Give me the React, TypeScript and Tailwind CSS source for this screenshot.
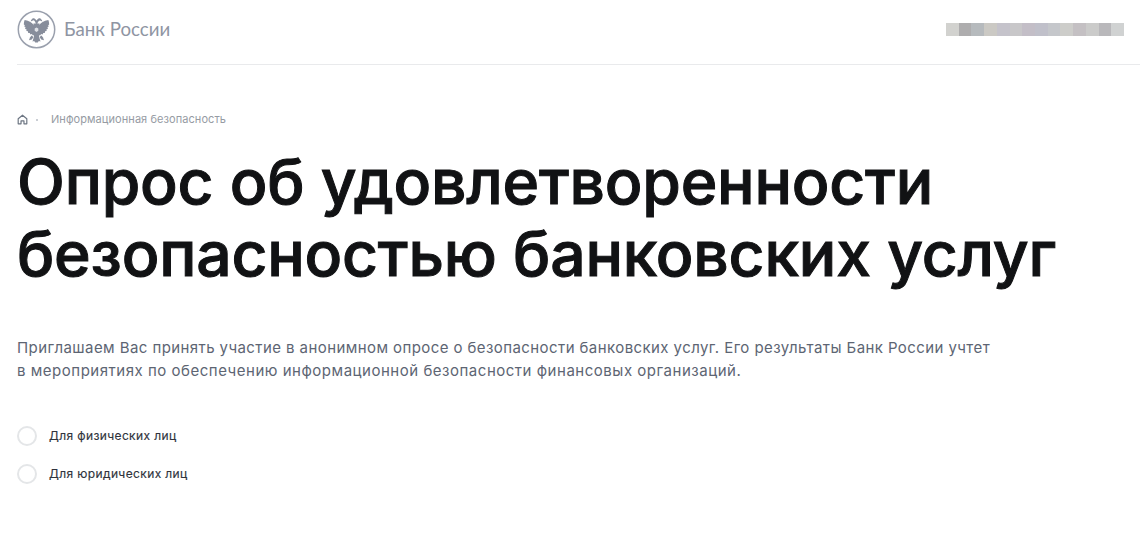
const blurCells = [
  'bg-[#d2d2cf]', 'bg-[#aeadae]', 'bg-[#b6babd]', 'bg-[#cbc9c4]', 'bg-[#c5c3cb]', 'bg-[#c8c7c9]', 'bg-[#c3bec7]',
  'bg-[#c0c0ca]', 'bg-[#c5c7cb]', 'bg-[#cdcdca]', 'bg-[#c4c0c3]', 'bg-[#cbcbca]', 'bg-[#b9b8bb]', 'bg-[#d0d2d2]',
];

const Emblem = () => (
  <svg width="39" height="39" viewBox="0 0 39 39" fill="none">
    <circle cx="19.500" cy="19.500" r="18.200" stroke="#9aa0ad" strokeWidth="1.500" />
    <g fill="#878d9b">
      {/* левое крыло */}
      <path d="M17 15.500c-1.800-2.800-4.800-5.200-9.300-5.600-.6 1.200-.9 3-.8 4.800l1 .2-.7 1.700 1.300.4-.4 1.900 1.400.3-.1 1.900 1.500.1.300 1.900 1.500-.2.700 1.700 1.500-.5.900 1.300 2.100-1.200z" />
      {/* правое крыло */}
      <path d="M22 15.500c1.800-2.800 4.800-5.200 9.300-5.600.6 1.200.9 3 .8 4.800l-1 .2.700 1.700-1.300.4.400 1.900-1.400.3.100 1.900-1.500.1-.3 1.900-1.500-.2-.7 1.700-1.500-.5-.9 1.300-2.100-1.200z" />
      {/* туловище и хвост */}
      <path d="M16.500 13.500h6l.7 8.500-1.200 4.500 1.500 5-1.700-.6-1 1.600h-2.600l-1-1.600-1.700.6 1.500-5-1.200-4.500z" />
      {/* головы */}
      <path d="M18.800 13.800c-.3-1.600-.9-2.800-1.900-3.600l-1 .3-2.200.9.500-1.500 1.300-1.300c1-.8 2.100-.5 2.700.4l1.300 1.500 1.300-1.500c.6-.9 1.700-1.200 2.700-.4l1.300 1.300.5 1.500-2.200-.9-1 .3c-1 .8-1.600 2-1.900 3.600z" />
      {/* лапы */}
      <path d="M14.500 25.500l2 1.500-1.700 2.500-2.800.8 1-2.800z" />
      <path d="M24.500 25.500l-2 1.500 1.700 2.500 2.800.8-1-2.800z" />
    </g>
    <path d="M19.500 17.500l1.800 1v2.200l-1.800 1.300-1.800-1.300v-2.200z" fill="#dfe1e6" />
  </svg>
);

const HomeIcon = () => (
  <svg width="11" height="11" viewBox="0 0 12 12" fill="none" stroke="#6d7683" strokeWidth="1.300" strokeLinejoin="round">
    <path d="M1.300 5.200 6 1.300l4.700 3.900v5.500H7.600V7.600H4.400v3.100H1.300z" />
  </svg>
);

const Option = ({ label }: { label: string }) => (
  <label className="flex items-center gap-3 h-[20px]">
    <span className="w-[20px] h-[20px] rounded-full border-2 border-[#e4e6e8] bg-white shrink-0" />
    <span className="text-[12px] font-normal text-[#2f333c] tracking-[0.38px] [-webkit-text-stroke:0.15px_#2f333c]">{label}</span>
  </label>
);

export default function App() {
  return (
    <div className="w-[1140px] h-[551px] overflow-hidden bg-white pl-[17px] font-['Inter','Noto_Sans',sans-serif]">
      <header className="flex items-center justify-between h-[65px] border-b border-[#e9eaec] pr-[16px]">
        <div className="flex items-center gap-[8px] pb-[5px]">
          <Emblem />
          <span className="font-['Lato','Open_Sans',sans-serif] text-[18.700px] text-[#8f95a3]">Банк России</span>
        </div>
        <div className="flex w-[178px] h-[13px] mb-[6px]">
          {blurCells.map((c, i) => (
            <div key={i} className={`flex-1 ${c}`} />
          ))}
        </div>
      </header>

      <nav className="flex items-center mt-[48px] h-[13px] text-[11px] tracking-[0.07px] text-[#969ba3]">
        <HomeIcon />
        <span className="ml-[8px] mr-[13px] w-[2px] h-[2px] rounded-full bg-[#b9bec6]" />
        <span>Информационная безопасность</span>
      </nav>

      <h1 className="mt-[20px] text-[62.400px] leading-[72px] font-medium text-[#111214] tracking-[-0.2px] [-webkit-text-stroke:1px_#111214]">
        Опрос об удовлетворенности
        <br />
        безопасностью банковских услуг
      </h1>

      <p className="mt-[46px] text-[15px] leading-[23px] text-[#5d6573] tracking-[0.42px]">
        Приглашаем Вас принять участие в анонимном опросе о безопасности банковских услуг. Его результаты Банк России учтет
        <span className="block tracking-[0.52px]">
          в мероприятиях по обеспечению информационной безопасности финансовых организаций.
        </span>
      </p>

      <div className="mt-[44px] flex flex-col gap-[18px]">
        <Option label="Для физических лиц" />
        <Option label="Для юридических лиц" />
      </div>
    </div>
  );
}
